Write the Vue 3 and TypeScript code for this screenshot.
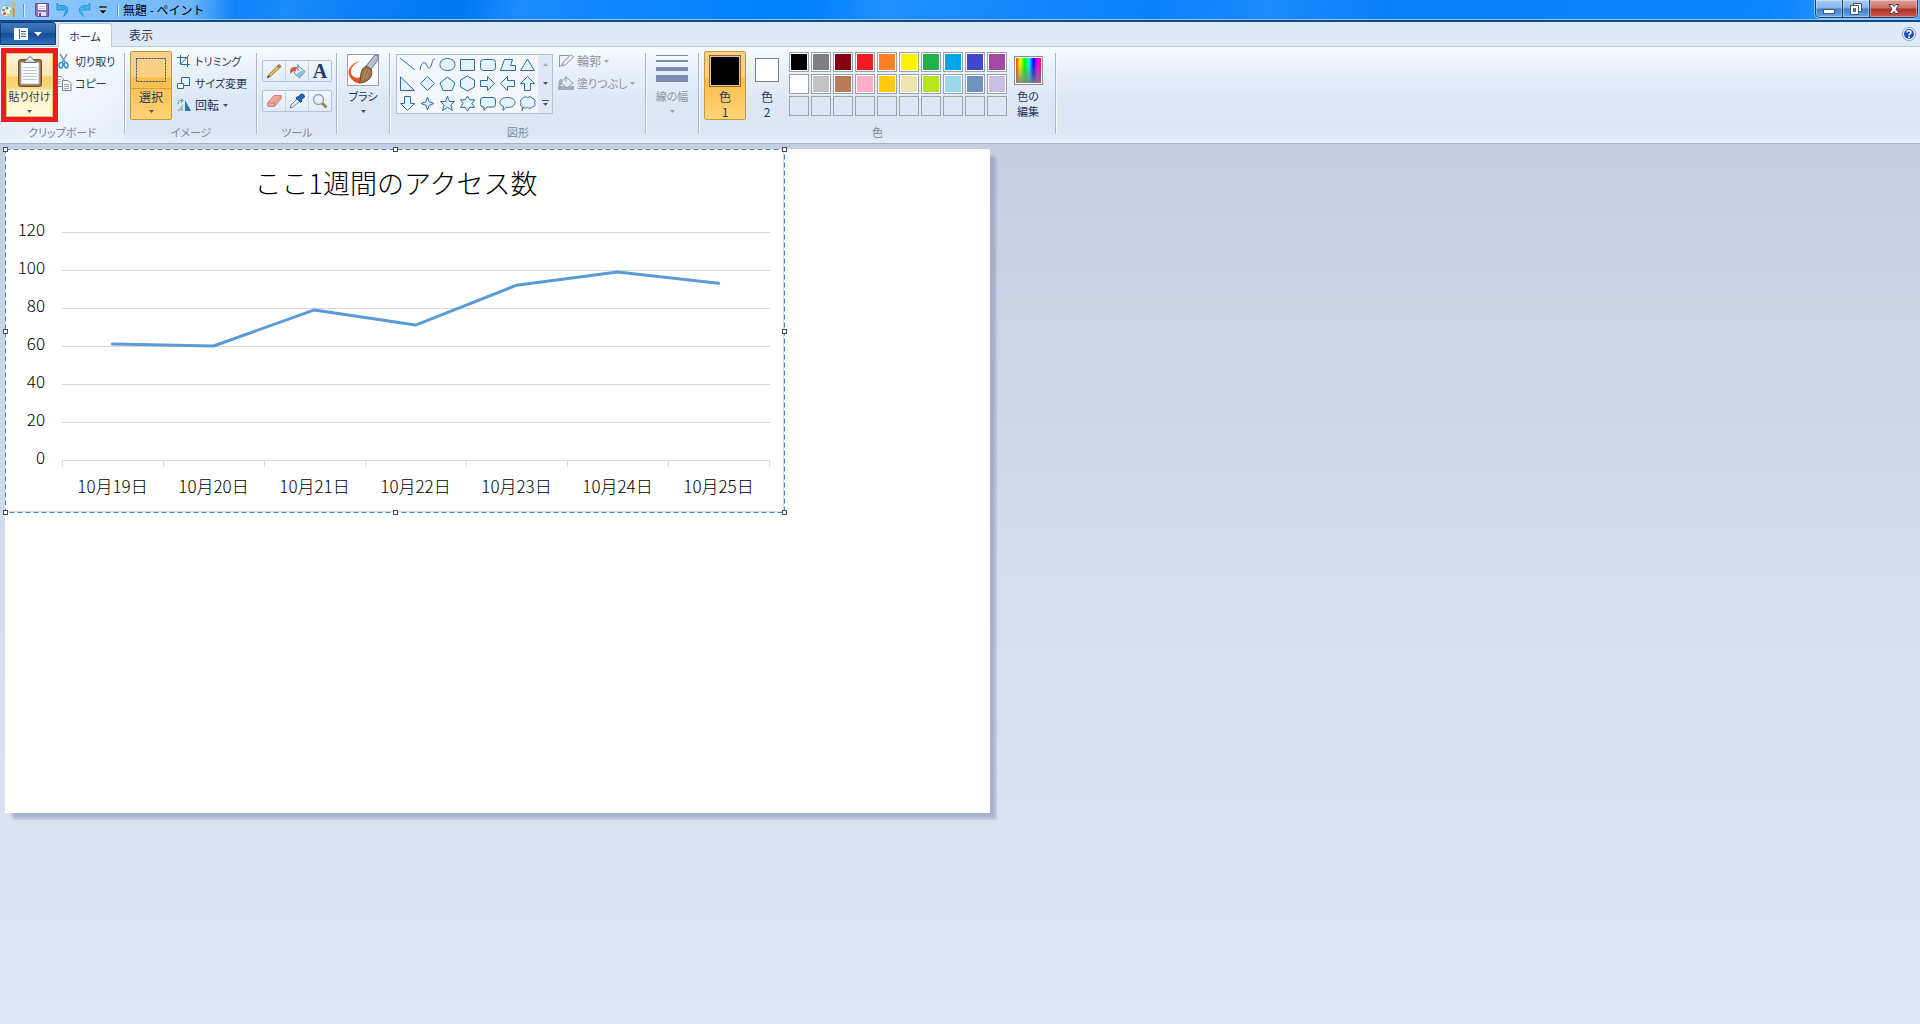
<script setup lang="ts">
interface Point {
  label: string
  value: number
}

const points: Point[] = [
  { label: '10月19日', value: 61 },
  { label: '10月20日', value: 60 },
  { label: '10月21日', value: 79 },
  { label: '10月22日', value: 71 },
  { label: '10月23日', value: 92 },
  { label: '10月24日', value: 99 },
  { label: '10月25日', value: 93 },
]

const plot = { left: 57, right: 765, bottom: 311, unit: 1.9, step: 101 }
const yTicks: number[] = [0, 20, 40, 60, 80, 100, 120]
const yOf = (v: number): number => plot.bottom - v * plot.unit
const xOf = (i: number): number => plot.left + plot.step * (i + 0.5)
const linePoints: string = points.map((p, i) => `${xOf(i)},${yOf(p.value)}`).join(' ')

const palette: { name: string; color: string }[] = [
  { name: '黒', color: '#000000' },
  { name: '灰色-50%', color: '#7f7f7f' },
  { name: '濃い赤', color: '#880015' },
  { name: '赤', color: '#ed1c24' },
  { name: 'オレンジ', color: '#ff7f27' },
  { name: '黄', color: '#fff200' },
  { name: '緑', color: '#22b14c' },
  { name: '青緑', color: '#00a2e8' },
  { name: '藍色', color: '#3f48cc' },
  { name: '紫', color: '#a349a4' },
  { name: '白', color: '#ffffff' },
  { name: '灰色-25%', color: '#c3c3c3' },
  { name: '茶', color: '#b97a57' },
  { name: 'ローズ', color: '#ffaec9' },
  { name: '金', color: '#ffc90e' },
  { name: '薄い黄', color: '#efe4b0' },
  { name: 'ライム', color: '#b5e61d' },
  { name: '薄い青緑', color: '#99d9ea' },
  { name: '青灰色', color: '#7092be' },
  { name: 'ラベンダー', color: '#c8bfe7' },
]

const shapes: { name: string; d: string }[] = [
  { name: '直線', d: 'M1 2L16 14' },
  { name: '曲線', d: 'M1 14C2 7 5 5 7 8S10 15 12 10S13 3 16 3' },
  { name: '楕円', d: 'M8.5 2.5C13 2.5 16 5 16 8.5S13 14.5 8.5 14.5S1 12 1 8.5S4 2.5 8.5 2.5Z' },
  { name: '四角形', d: 'M1.5 3.5H15.5V14.5H1.5Z' },
  { name: '角丸四角形', d: 'M4.500 3.500H13.500Q16.500 3.500 16.500 6.500V11.500Q16.500 14.500 13.500 14.500H4.500Q1.500 14.500 1.500 11.500V6.500Q1.500 3.500 4.500 3.500Z' },
  { name: '多角形', d: 'M5.500 3.500H13.500L11.500 9.500H16.500V14.500H1.500Z' },
  { name: '三角形', d: 'M8.500 3L15.500 14.500H1.500Z' },
  { name: '直角三角形', d: 'M1.500 2V15.500H15.500Z' },
  { name: 'ひし形', d: 'M8.500 1.500L15.500 8.500L8.500 15.500L1.500 8.500Z' },
  { name: '五角形', d: 'M8.500 2L16 8L13 15.500H4L1 8Z' },
  { name: '六角形', d: 'M8.500 1L15.500 5V12L8.500 16L1.500 12V5Z' },
  { name: '右矢印', d: 'M1.500 5.500H8.500V1.500L15.500 8.500L8.500 15.500V11.500H1.500Z' },
  { name: '左矢印', d: 'M15.500 5.500H8.500V1.500L1.500 8.500L8.500 15.500V11.500H15.500Z' },
  { name: '上矢印', d: 'M5.500 15.500V8.500H1.500L8.500 1.500L15.500 8.500H11.500V15.500Z' },
  { name: '下矢印', d: 'M5.500 1.500V8.500H1.500L8.500 15.500L15.500 8.500H11.500V1.500Z' },
  { name: '四方星', d: 'M8.500 2L10.200 6.800L15 8.500L10.200 10.200L8.500 15L6.800 10.200L2 8.500L6.800 6.800Z' },
  { name: '五方星', d: 'M8.500 1.500L10.500 6.500H15.500L11.800 10L13.500 15.500L8.500 12.300L3.500 15.500L5.200 10L1.500 6.500H6.500Z' },
  { name: '六方星', d: 'M8.500 1L10.800 4.800H15.500L13 8.500L15.500 12.300H10.800L8.500 16L6.200 12.300H1.500L4 8.500L1.500 4.800H6.200Z' },
  { name: '角丸吹き出し', d: 'M4 2.500H14Q16.500 2.500 16.500 5V9.500Q16.500 12 14 12H8L5 15.500V12H4Q1.500 12 1.500 9.500V5Q1.500 2.500 4 2.500Z' },
  { name: '円形吹き出し', d: 'M8.500 2.500C13 2.500 16 4.500 16 7.500S13 12.500 8.500 12.500L7 12.300L4 15.500L4.500 11.500C2.500 10.600 1 9.500 1 7.500C1 4.500 4 2.500 8.500 2.500Z' },
  { name: '雲形吹き出し', d: 'M4 3.500C5 1.500 7.500 1.500 8.500 2.700C10 1.200 13 1.500 13.500 3.500C16 3.500 16.800 6 15.500 7.500C17 9.500 15.500 12 13.500 11.800C12 13.800 9.500 13.500 8.500 12.300C7 13.500 5.500 13 4.500 12.300L3 15.500L3.500 12C1.500 11.500 1 9.500 2.200 8C0.500 6 2 3.700 4 3.500Z' },
]

const handles: string[] = ['nw', 'n', 'ne', 'w', 'e', 'sw', 's', 'se']
</script>

<template>
  <div class="app">
    <header class="titlebar">
      <svg class="app-icon" width="16" height="16" viewBox="0 0 16 16" aria-hidden="true">
        <path d="M0.500 9C0.500 4 5 2.500 9 4C12.500 5 12.500 8 10.500 8.500C9 9.500 12 11 10 13.500C7 16.500 0.500 14 0.500 9Z" fill="#eef5ee" stroke="#8fb2b5" />
        <circle cx="3.500" cy="8" r="1.500" fill="#3b9be0" />
        <circle cx="7" cy="6" r="1.500" fill="#42b549" />
        <circle cx="4.500" cy="11.500" r="1.500" fill="#e14a36" />
        <circle cx="8" cy="12.500" r="1.200" fill="#f0b429" />
        <path d="M13.500 6L14 15" stroke="#e08a2d" stroke-width="2" />
        <path d="M12 0H15L14.500 6H13Z" fill="#eab45a" />
      </svg>
      <span class="divider"></span>
      <button class="quick" aria-label="上書き保存">
        <svg width="16" height="16" viewBox="0 0 16 16">
          <path d="M1.500 1.500H14.500V14.500H3L1.500 13Z" fill="#8f6fb4" stroke="#6a4b96" />
          <rect x="4" y="2" width="8" height="6" fill="#fff" />
          <path d="M5 4.500H11M5 6.500H11" stroke="#c9c2d6" />
          <rect x="4" y="10" width="8" height="4" fill="#e6dcef" />
          <rect x="5" y="11" width="2" height="3" fill="#6a4b96" />
        </svg>
      </button>
      <button class="quick" aria-label="元に戻す">
        <svg width="16" height="16" viewBox="0 0 16 16">
          <path d="M2 1V8H9L6.500 5.800C10 5 12 8 8.500 14.500C15 10 14 2 4.800 3.700Z" fill="#3fb2ea" stroke="#2a8fd0" />
        </svg>
      </button>
      <button class="quick" aria-label="やり直し">
        <svg width="16" height="16" viewBox="0 0 16 16">
          <path d="M14 1V8H7L9.500 5.800C6 5 4 8 7.500 14.500C1 10 2 2 11.200 3.700Z" fill="#3fb8ee" stroke="#2a9ada" />
        </svg>
      </button>
      <button class="quick narrow" aria-label="クイック アクセスのカスタマイズ">
        <svg width="8" height="8" viewBox="0 0 8 8">
          <path d="M0 0H8V2H0ZM0 4H8L4 8Z" fill="#111" stroke="#cfe6ff" stroke-width="0.500" />
        </svg>
      </button>
      <span class="divider"></span>
      <h1 class="window-title">無題 - ペイント</h1>
      <div class="window-controls">
        <button class="win" aria-label="最小化">
          <svg width="14" height="14" viewBox="0 0 14 14">
            <rect x="1.500" y="7.500" width="11" height="4" fill="#fff" stroke="#4a5568" />
          </svg>
        </button>
        <button class="win" aria-label="元に戻す（縮小）">
          <svg width="14" height="14" viewBox="0 0 14 14">
            <path d="M4.500 1.500H12.500V9.500H4.500Z" fill="#fff" stroke="#4a5568" />
            <path d="M1.500 3.500H9.500V12.500H1.500Z" fill="#fff" stroke="#4a5568" />
            <path d="M4.500 6.500H6.500V9.500H4.500Z" fill="#5f8fc8" stroke="#4a5568" />
          </svg>
        </button>
        <button class="win close" aria-label="閉じる">
          <svg width="14" height="14" viewBox="0 0 14 14">
            <path d="M2 2.500H5L7 4.500L9 2.500H12L9 7L12 11.500H9L7 9.500L5 11.500H2L5 7Z" fill="#fff" stroke="#5a3a40" />
          </svg>
        </button>
      </div>
    </header>

    <nav class="tabs">
      <button class="file" aria-label="ペイント メニュー">
        <svg width="14" height="12" viewBox="0 0 14 12">
          <rect width="14" height="12" fill="#fff" />
          <path d="M5.500 1V11" stroke="#3b6fb5" />
          <path d="M7 3.500H12M7 6H12M7 8.500H12" stroke="#2d5ea8" />
        </svg>
        <svg width="8" height="4" viewBox="0 0 8 4"><path d="M0 0H8L4 4Z" fill="#fff" /></svg>
      </button>
      <button class="tab active">ホーム</button>
      <button class="tab view">表示</button>
      <button class="help" aria-label="ヘルプ">
        <svg width="14" height="14" viewBox="0 0 14 14">
          <circle cx="7" cy="7" r="6.500" fill="#fff" stroke="#7a9be0" />
          <circle cx="7" cy="7" r="5" fill="#1d4fc4" />
          <path d="M5 5.500C5 3.200 9 3.200 9 5.500C9 7 7 6.800 7 8.500" fill="none" stroke="#fff" stroke-width="1.500" />
          <rect x="6" y="9.500" width="2" height="1.500" fill="#fff" />
        </svg>
      </button>
    </nav>

    <section class="ribbon">
      <div class="group clipboard">
        <div class="body">
          <div class="marker">
            <button class="big paste">
              <span class="pic">
                <svg width="26" height="32" viewBox="0 0 26 32">
                  <rect x="1.500" y="3.500" width="23" height="27" rx="2" fill="#9c7148" stroke="#71502f" />
                  <path d="M4 6.500H22V28H4Z" fill="#f8fbff" stroke="#b7bfca" />
                  <path d="M6 11.500H20M6 14.500H20M6 17.500H20M6 20.500H20M6 23.500H20" stroke="#b9c8dc" />
                  <path d="M7 6.500C8 4 10 4 10.500 2.500C11 0.500 15 0.500 15.500 2.500C16 4 18 4 19 6.500Z" fill="#d5d8de" stroke="#6b6f78" />
                  <circle cx="13" cy="3" r="1.200" fill="#fff" />
                </svg>
              </span>
              <span class="cap">貼り付け</span>
              <svg class="caret" width="5" height="3" viewBox="0 0 5 3"><path d="M0 0H5L2.500 3Z" /></svg>
            </button>
          </div>
          <div class="rows">
            <button class="row">
              <svg width="14" height="16" viewBox="0 0 14 16">
                <path d="M2 1L7 9M9 1L4.500 9" stroke="#7c8fa8" stroke-width="1.500" />
                <path d="M1 12C1 10 2.500 9 4 9.500C5.500 10 5 15 3 15C1.500 15 1 13.500 1 12ZM6.500 10C8 9 10 10 10 12.500C10 15 8 15.500 7 14C6.300 13 6 11 6.500 10Z" fill="none" stroke="#2a8fd4" stroke-width="1.500" />
              </svg>
              切り取り
            </button>
            <button class="row">
              <svg width="14" height="16" viewBox="0 0 14 16">
                <path d="M-3 1.500H3L5.500 4V11.500H-3Z" fill="#fff" stroke="#8793a5" />
                <path d="M0 4.500H3M0 6.500H3M0 8.500H3" stroke="#9fb1cc" />
                <path d="M4.500 5.500H10L13 8.500V15.500H4.500Z" fill="#fff" stroke="#77808f" />
                <path d="M6 9.500H11M6 11.500H11M6 13.500H11" stroke="#8fa5c5" />
              </svg>
              コピー
            </button>
          </div>
        </div>
        <span class="label">クリップボード</span>
      </div>
      <span class="sep"></span>

      <div class="group image">
        <div class="body">
          <button class="big picked split">
            <span class="pic">
              <svg width="30" height="26" viewBox="0 0 30 26">
                <rect x="0.500" y="1.500" width="29" height="23" fill="none" stroke="#2d4a68" stroke-dasharray="2 1" />
              </svg>
            </span>
            <span class="cap kanji">選択</span>
            <svg class="caret" width="5" height="3" viewBox="0 0 5 3"><path d="M0 0H5L2.500 3Z" /></svg>
          </button>
          <div class="rows">
            <button class="row">
              <svg width="14" height="14" viewBox="0 0 14 14">
                <path d="M3.500 1V10.500H13M0 3.500H10.500V13M4 10L12 1" fill="none" stroke="#1f6ca5" />
              </svg>
              トリミング
            </button>
            <button class="row">
              <svg width="14" height="14" viewBox="0 0 14 14">
                <path d="M4.500 1.500H12.500V9.500H4.500Z" fill="#eaf5fc" stroke="#1f6ca5" />
                <path d="M0.500 7.500H6.500V12.500H0.500Z" fill="#fff" stroke="#1f6ca5" />
              </svg>
              サイズ変更
            </button>
            <button class="row kanji">
              <svg width="14" height="14" viewBox="0 0 14 14">
                <path d="M8 2V13H14Z" fill="#2479b5" />
                <path d="M6 6V13H0Z" fill="#b3b9c1" />
                <path d="M1 6C1 3 3 2 5.500 2.500M4 0.500L6 2.500L4 5" fill="none" stroke="#2f8fd6" />
              </svg>
              回転
              <svg class="caret" width="5" height="3" viewBox="0 0 5 3"><path d="M0 0H5L2.500 3Z" /></svg>
            </button>
          </div>
        </div>
        <span class="label">イメージ</span>
      </div>
      <span class="sep"></span>

      <div class="group tools">
        <div class="body">
          <div class="tool-row">
            <button class="tool" aria-label="鉛筆">
              <svg width="16" height="16" viewBox="0 0 16 16">
                <path d="M1.500 14.500L3.500 11L11.500 3L13.500 5L5.500 12.500Z" fill="#f3bd4b" stroke="#9c7840" />
                <path d="M11.500 3L13 1.500L15 3.500L13.500 5Z" fill="#d9776a" stroke="#a8564e" />
                <path d="M1 15L2 12.500L3.500 14Z" fill="#222" />
              </svg>
            </button>
            <button class="tool" aria-label="塗りつぶし">
              <svg width="17" height="16" viewBox="0 0 17 16">
                <path d="M9 2.500L16 8.500L10.500 15L5 10Z" fill="#e4eff8" stroke="#6e8aa6" />
                <path d="M9 8V1" stroke="#6e8aa6" />
                <path d="M10.500 14.500L15.500 8.500L12.500 7.500L7 11.500Z" fill="#8fbbdd" />
                <path d="M8 4.500C3 3 0 6 1.500 11C2.500 9 4 8 6 8Z" fill="#dd5535" />
              </svg>
            </button>
            <button class="tool letter" aria-label="テキスト">A</button>
          </div>
          <div class="tool-row">
            <button class="tool" aria-label="消しゴム">
              <svg width="17" height="16" viewBox="0 0 17 16">
                <path d="M1.500 10L8 2.500H15.500L15 6L8.500 13.500H2Z" fill="#f0a5a0" stroke="#cf8280" />
                <path d="M1.500 10H8.500L15.500 3M8.500 10V13" stroke="#cf8280" fill="none" />
              </svg>
            </button>
            <button class="tool" aria-label="色の選択">
              <svg width="16" height="16" viewBox="0 0 16 16">
                <path d="M1 15L2 12L8 6L10.500 8.500L4 14Z" fill="#e3f0f8" stroke="#67839d" />
                <path d="M7 5L11.500 9.500L13 8L12 7L15.500 4Q15.500 0.500 12 1L9.500 4L8.500 3.500Z" fill="#2668b8" stroke="#174a86" />
              </svg>
            </button>
            <button class="tool" aria-label="拡大鏡">
              <svg width="16" height="16" viewBox="0 0 16 16">
                <path d="M10 10L14.500 14.500" stroke="#a5805c" stroke-width="3" />
                <circle cx="6.500" cy="6.500" r="5" fill="#e3f1fb" stroke="#9aa4b0" stroke-width="1.500" />
              </svg>
            </button>
          </div>
        </div>
        <span class="label">ツール</span>
      </div>
      <span class="sep"></span>

      <div class="group brush">
        <div class="body">
          <button class="big">
            <span class="pic">
              <svg width="32" height="32" viewBox="0 0 32 32">
                <rect x="0.500" y="0.500" width="31" height="31" fill="#fafbfc" stroke="#9aa1ab" />
                <path d="M13 7C4 9 -1 17 3 23C6 28 12 31 16 28L14 23C10 25 5 23 4 19C3 14 7 10 13 7Z" fill="#e85225" />
                <path d="M28 1H31V6L24 15L19 12Z" fill="#b4c0cd" stroke="#6c7a8a" />
                <path d="M19 12L24 15C27 21 22 29 12 29C14 26 13 23 14 19C15 15 17 13 19 12Z" fill="#9c7048" stroke="#765030" />
                <path d="M19 15L16 26M22 16L19 25" stroke="#c0966c" />
              </svg>
            </span>
            <span class="cap">ブラシ</span>
            <svg class="caret" width="5" height="3" viewBox="0 0 5 3"><path d="M0 0H5L2.500 3Z" /></svg>
          </button>
        </div>
      </div>
      <span class="sep"></span>

      <div class="group shapes">
        <div class="body">
          <div class="gallery">
            <div class="shape-grid">
              <button v-for="s in shapes" :key="s.name" class="shape" :aria-label="s.name">
                <svg width="17" height="17" viewBox="0 0 17 17"><path :d="s.d" /></svg>
              </button>
            </div>
            <div class="gallery-nav">
              <button aria-label="上へ">
                <svg class="caret pale" width="5" height="3" viewBox="0 0 5 3"><path d="M0 3H5L2.500 0Z" /></svg>
              </button>
              <button aria-label="下へ">
                <svg class="caret" width="5" height="3" viewBox="0 0 5 3"><path d="M0 0H5L2.500 3Z" /></svg>
              </button>
              <button aria-label="その他">
                <svg class="caret" width="7" height="6" viewBox="0 0 7 6"><path d="M0 0H7V1H0ZM1 3H6L3.500 6Z" /></svg>
              </button>
            </div>
          </div>
          <div class="rows">
            <button class="row kanji" disabled>
              <svg width="16" height="14" viewBox="0 0 16 14">
                <path d="M11 1.500H1.500V13L13 2.500" fill="#eef2f8" stroke="#8d99a8" />
                <path d="M4 12L5.500 8L13 0.500L15.500 3L8 10.500Z" fill="#e6e9ee" stroke="#8d939c" />
              </svg>
              輪郭
              <svg class="caret" width="5" height="3" viewBox="0 0 5 3"><path d="M0 0H5L2.500 3Z" /></svg>
            </button>
            <button class="row" disabled>
              <svg width="16" height="16" viewBox="0 0 16 16">
                <rect y="11" width="16" height="4" fill="#9fabbc" />
                <path d="M8 2L15 8L9 13L3 8Z" fill="#e8edf3" stroke="#909cab" />
                <path d="M8 1V7M4 4C1 5 0.500 8 1.500 11L4 8" fill="#a8b2be" stroke="#909cab" />
              </svg>
              塗りつぶし
              <svg class="caret" width="5" height="3" viewBox="0 0 5 3"><path d="M0 0H5L2.500 3Z" /></svg>
            </button>
          </div>
        </div>
        <span class="label">図形</span>
      </div>
      <span class="sep"></span>

      <div class="group width">
        <div class="body">
          <button class="big" disabled>
            <span class="pic">
              <svg width="32" height="30" viewBox="0 0 32 30">
                <path d="M0 0H32V1H0ZM0 5H32V7H0ZM0 12H32V16H0ZM0 20H32V27H0Z" fill="#7a8dae" />
              </svg>
            </span>
            <span class="cap">線の幅</span>
            <svg class="caret" width="5" height="3" viewBox="0 0 5 3"><path d="M0 0H5L2.500 3Z" /></svg>
          </button>
        </div>
      </div>
      <span class="sep"></span>

      <div class="group colors">
        <div class="body">
          <button class="big picked">
            <span class="pic"><span class="swatch first"></span></span>
            <span class="cap kanji">色<br />1</span>
          </button>
          <button class="big">
            <span class="pic"><span class="swatch second"></span></span>
            <span class="cap kanji">色<br />2</span>
          </button>
          <div class="palette">
            <button
              v-for="c in palette"
              :key="c.color"
              class="cell"
              :aria-label="c.name"
              :style="{ backgroundColor: c.color }"
            ></button>
            <button v-for="n in 10" :key="n" class="cell empty" :aria-label="`ユーザー設定の色 ${n}`"></button>
          </div>
          <button class="big">
            <span class="pic"><span class="spectrum"></span></span>
            <span class="cap">色の<br />編集</span>
          </button>
        </div>
        <span class="label">色</span>
      </div>
      <span class="sep"></span>
    </section>

    <main class="workspace">
      <div class="canvas">
        <div class="selection">
          <svg class="chart" width="780" height="364" viewBox="0 0 780 364" role="img" aria-label="ここ1週間のアクセス数">
            <path d="M0 362.500H778.500V0" fill="none" stroke="#d9d9d9" />
            <text class="chart-title" x="391" y="45" text-anchor="middle">ここ1週間のアクセス数</text>
            <g v-for="t in yTicks" :key="t">
              <line
                class="grid"
                :x1="plot.left"
                :x2="plot.right"
                :y1="Math.round(yOf(t)) + 0.5"
                :y2="Math.round(yOf(t)) + 0.5"
              />
              <text x="40" :y="yOf(t) + 4" text-anchor="end">{{ t }}</text>
            </g>
            <line
              v-for="n in 8"
              :key="n"
              class="grid"
              :x1="plot.left + plot.step * (n - 1) + 0.5"
              :x2="plot.left + plot.step * (n - 1) + 0.5"
              :y1="plot.bottom"
              :y2="plot.bottom + 7"
            />
            <text v-for="(p, i) in points" :key="p.label" :x="xOf(i)" y="344" text-anchor="middle">{{ p.label }}</text>
            <polyline class="series" :points="linePoints" />
          </svg>
          <svg class="marquee" width="780" height="364" viewBox="0 0 780 364" aria-hidden="true">
            <rect x="0.500" y="0.500" width="779" height="363" />
          </svg>
          <i v-for="h in handles" :key="h" class="handle" :class="h"></i>
        </div>
      </div>
    </main>
  </div>
</template>

<style>
body {
  margin: 0;
}
</style>

<style scoped>
.app {
  display: flex;
  flex-direction: column;
  min-height: 100vh;
  font-family: 'Noto Sans CJK JP', sans-serif;
  font-size: 11px;
  line-height: 16px;
  color: #1e395b;
  font-feature-settings: 'palt';
}
button {
  display: flex;
  align-items: center;
  justify-content: center;
  box-sizing: border-box;
  margin: 0;
  padding: 0;
  border: 0;
  background: none;
  font: inherit;
  color: inherit;
  font-feature-settings: inherit;
}
svg {
  display: block;
  flex: none;
}

/* Title bar */
.titlebar {
  display: flex;
  align-items: center;
  height: 22px;
  box-sizing: border-box;
  border-bottom: 2px solid #0f4a8c;
  box-shadow: inset 0 -1px #8cc8ff;
  background:
    linear-gradient(90deg, rgba(170, 212, 250, 0.85) 0, rgba(140, 198, 252, 0.75) 190px, rgba(120, 190, 255, 0) 235px),
    linear-gradient(100deg, #2c97f7 0, #0c82f8 12%, #1a8cfb 15%, #0a7ef6 19%, #0078f0 24%, #1a8cff 27%, #0a84ff 35%, #0080fc 42%, #1e90ff 46%, #1388fd 54%, #0a80fa 60%, #1a8cfd 66%, #0a80f8 72%, #0a84ff 92%, #48a4f8 100%);
}
.divider {
  width: 1px;
  height: 13px;
  margin: 0 5px 0 7px;
  background: #5d94cc;
  box-shadow: 1px 0 #d8ebfd;
}
.quick {
  width: 21px;
  height: 20px;
}
.quick.narrow {
  width: 14px;
  margin-left: 2px;
}
.titlebar .divider + .quick {
  margin-left: 2px;
}
.window-title {
  margin: 0;
  font-size: 12px;
  font-weight: 400;
  font-feature-settings: normal;
  color: #000;
}
.window-controls {
  display: flex;
  align-self: flex-start;
  margin: 0 2px 0 auto;
  border: 1px solid #1c3c66;
  border-top: 0;
  border-radius: 0 0 5px 5px;
  overflow: hidden;
  box-shadow: 0 0 0 1px #8cc4fa;
}
.win {
  width: 27px;
  height: 17px;
  border-right: 1px solid #1c3c66;
  background: linear-gradient(#a9cdf3 0, #80b2ea 48%, #3e7fc8 52%, #67a8e8 100%);
  box-shadow: inset 0 0 0 1px rgba(255, 255, 255, 0.35);
}
.win.close {
  width: 47px;
  border-right: 0;
  background: linear-gradient(#dba29c 0, #cb6e64 48%, #b02f24 52%, #c8584c 100%);
}

/* Tab strip */
.tabs {
  display: flex;
  height: 25px;
  box-sizing: border-box;
  border-bottom: 1px solid #bac9db;
  background: #dfe9f5;
}
.file {
  gap: 6px;
  width: 56px;
  height: 23px;
  border: 1px solid #123c7c;
  border-radius: 0 3px 0 0;
  background: linear-gradient(#3f78bd 0, #2860aa 45%, #164a96 50%, #2c70b8 100%);
}
.tab {
  width: 54px;
  height: 23px;
  margin-top: 1px;
}
.tab.active {
  height: 24px;
  margin-left: 2px;
  border: 1px solid #bac9db;
  border-bottom: 0;
  border-radius: 3px 3px 0 0;
  background: #fbfdff;
  margin-bottom: -1px;
}
.tab.view {
  margin-left: 2px;
  font-size: 12px;
}
.help {
  margin: 0 4px 0 auto;
}

/* Ribbon */
.ribbon {
  display: flex;
  height: 97px;
  box-sizing: border-box;
  border-bottom: 1px solid #a3b2c8;
  background: linear-gradient(#f8fcff 0, #e9f1fa 22%, #dce6f4 60%, #dbe6f4 90%, #e6effa 100%);
}
.group {
  display: flex;
  flex-direction: column;
  box-sizing: border-box;
  padding-top: 1px;
}
.body {
  display: flex;
  align-items: flex-start;
  box-sizing: border-box;
  height: 76px;
  padding-left: 4px;
}
.label {
  text-align: center;
  color: #7586a0;
}
.sep {
  flex: none;
  width: 1px;
  margin: 6px 0 9px;
  border-right: 1px solid #f6faff;
  background: #a9b8cd;
}
.clipboard {
  width: 124px;
  background: radial-gradient(ellipse at center, rgba(255, 255, 255, 0.7), rgba(240, 248, 255, 0.3));
}
.clipboard .body {
  padding-left: 1px;
}
.image {
  width: 130px;
}
.tools {
  width: 78px;
}
.brush {
  width: 51px;
}
.shapes {
  width: 254px;
}
.shapes .body {
  padding-left: 5px;
}
.brush .body,
.width .body {
  padding-left: 0;
}
.width {
  width: 51px;
}
.colors {
  width: 355px;
}
.big {
  flex-direction: column;
  justify-content: flex-start;
  width: 42px;
  height: 69px;
  margin-top: 3px;
  line-height: 15px;
}
.pic {
  display: flex;
  align-items: center;
  justify-content: center;
  height: 38px;
}
.cap {
  white-space: nowrap;
}
.kanji {
  font-size: 12px;
}
.caret {
  fill: #45566e;
}
.caret.pale {
  fill: #a3acb8;
}
.big .caret {
  margin-top: 6px;
}
.brush .big,
.width .big {
  width: 50px;
}
.marker {
  border: 5px solid #ec1c24;
}
.paste {
  width: 47px;
  height: 64px;
  margin: 0;
  border: 1px solid #e6c45e;
  background: linear-gradient(#fdf3dd 0, #fbe3b0 22px, #fad06a 23px, #fbd980 34px, #fff3b8 36px, #fffbe0 100%);
}
.paste .pic {
  height: 35px;
}
.picked {
  border: 1px solid #c29a3c;
  border-radius: 2px;
  background: linear-gradient(#f6cf8c 0, #fbcf7f 25px, #fbbd4c 26px, #fdd376 100%);
}
.picked .pic {
  height: 37px;
}
.split .pic {
  align-self: stretch;
  height: 36px;
  border-bottom: 1px solid #d6a040;
}
.rows {
  padding-top: 2px;
}
.row {
  justify-content: flex-start;
  gap: 4px;
  height: 22px;
  white-space: nowrap;
}
.clipboard .row {
  gap: 3px;
}
.image .rows {
  padding-left: 5px;
}
.shapes .rows {
  padding-left: 5px;
}
.shapes .row {
  gap: 3px;
}
button:disabled {
  color: #8d949f;
}
button:disabled .caret {
  fill: #9aa3b0;
}

/* Tools */
.tools .body {
  flex-direction: column;
  gap: 8px;
  padding-top: 12px;
}
.tool-row {
  display: flex;
  height: 22px;
  box-sizing: border-box;
  border: 1px solid #b4c2d6;
  border-radius: 2px;
  background: linear-gradient(#eff5fc, #e3ebf7);
}
.tool {
  width: 22px;
  height: 20px;
}
.tool + .tool {
  width: 23px;
  border-left: 1px solid #c8d4e4;
}
.letter {
  font-family: 'Liberation Serif', serif;
  font-size: 20px;
  font-weight: 700;
  color: #1f3a63;
}

/* Shape gallery */
.gallery {
  display: flex;
  box-sizing: border-box;
  width: 157px;
  height: 60px;
  margin-top: 6px;
  border: 1px solid #b4c1d4;
  background: #f3f7fc;
}
.shape-grid {
  display: grid;
  flex: 1;
  grid-template-columns: repeat(7, 1fr);
  grid-template-rows: repeat(3, 1fr);
}
.shape path {
  fill: #e3f2fb;
  stroke: #2d6c9c;
}
.shape:nth-child(-n + 2) path {
  fill: none;
}
.gallery-nav {
  display: grid;
  width: 14px;
  grid-template-rows: repeat(3, 1fr);
  background: #dfe8f4;
}

/* Colours */
.swatch {
  box-sizing: border-box;
  border: 1px solid #7c7f86;
}
.swatch.first {
  width: 32px;
  height: 32px;
  border-color: #8a6a34;
  background: #000;
  box-shadow: inset 0 0 0 1px #e6c68c;
}
.swatch.second {
  width: 24px;
  height: 24px;
  background: #fff;
}
.palette {
  display: grid;
  grid-template-columns: repeat(10, 20px);
  gap: 2px;
  margin: 4px 0 0 1px;
}
.cell {
  height: 20px;
  border: 1px solid #9da1a8;
  box-shadow: inset 0 0 0 1px #fff;
}
.cell.empty {
  box-shadow: none;
}
.spectrum {
  box-sizing: border-box;
  width: 29px;
  height: 29px;
  border: 1px solid #8e8e92;
  box-shadow: inset 0 0 0 1px #fff;
  background:
    linear-gradient(rgba(128, 128, 128, 0) 20%, rgba(128, 128, 128, 0.9)),
    linear-gradient(90deg, #f00, #ff0 18%, #0f0 36%, #0ff 52%, #00f 68%, #f0f 84%, #f00);
}

/* Drawing area */
.workspace {
  flex: 1;
  padding: 5px;
  background: linear-gradient(#c5cee0 0, #d3dded 50%, #dde7f3 100%);
}
.canvas {
  width: 985px;
  height: 664px;
  background: #fff;
  box-shadow: 8px 8px 0 -1px rgba(150, 165, 190, 0.25), 6px 6px 3px -1px rgba(120, 136, 165, 0.45);
}
.selection {
  position: relative;
  width: 780px;
  height: 364px;
}
.chart text {
  font-family: 'Noto Sans CJK JP', sans-serif;
  font-size: 17px;
  font-weight: 300;
  font-feature-settings: normal;
  fill: #000;
}
.chart .chart-title {
  font-size: 27px;
}
.grid {
  stroke: #d9d9d9;
}
.series {
  fill: none;
  stroke: #5b9bd5;
  stroke-width: 3px;
  stroke-linecap: round;
  stroke-linejoin: round;
}
.marquee {
  position: absolute;
  inset: 0;
}
.marquee rect {
  fill: none;
  stroke: #3f86d2;
  stroke-dasharray: 5 3;
}
.handle {
  position: absolute;
  width: 3px;
  height: 3px;
  border: 1px solid #4a4a4a;
  background: #fff;
}
.nw,
.n,
.ne {
  top: -2px;
}
.sw,
.s,
.se {
  bottom: -2px;
}
.nw,
.w,
.sw {
  left: -2px;
}
.ne,
.e,
.se {
  right: -2px;
}
.n,
.s {
  left: calc(50% - 2px);
}
.w,
.e {
  top: calc(50% - 2px);
}
</style>
